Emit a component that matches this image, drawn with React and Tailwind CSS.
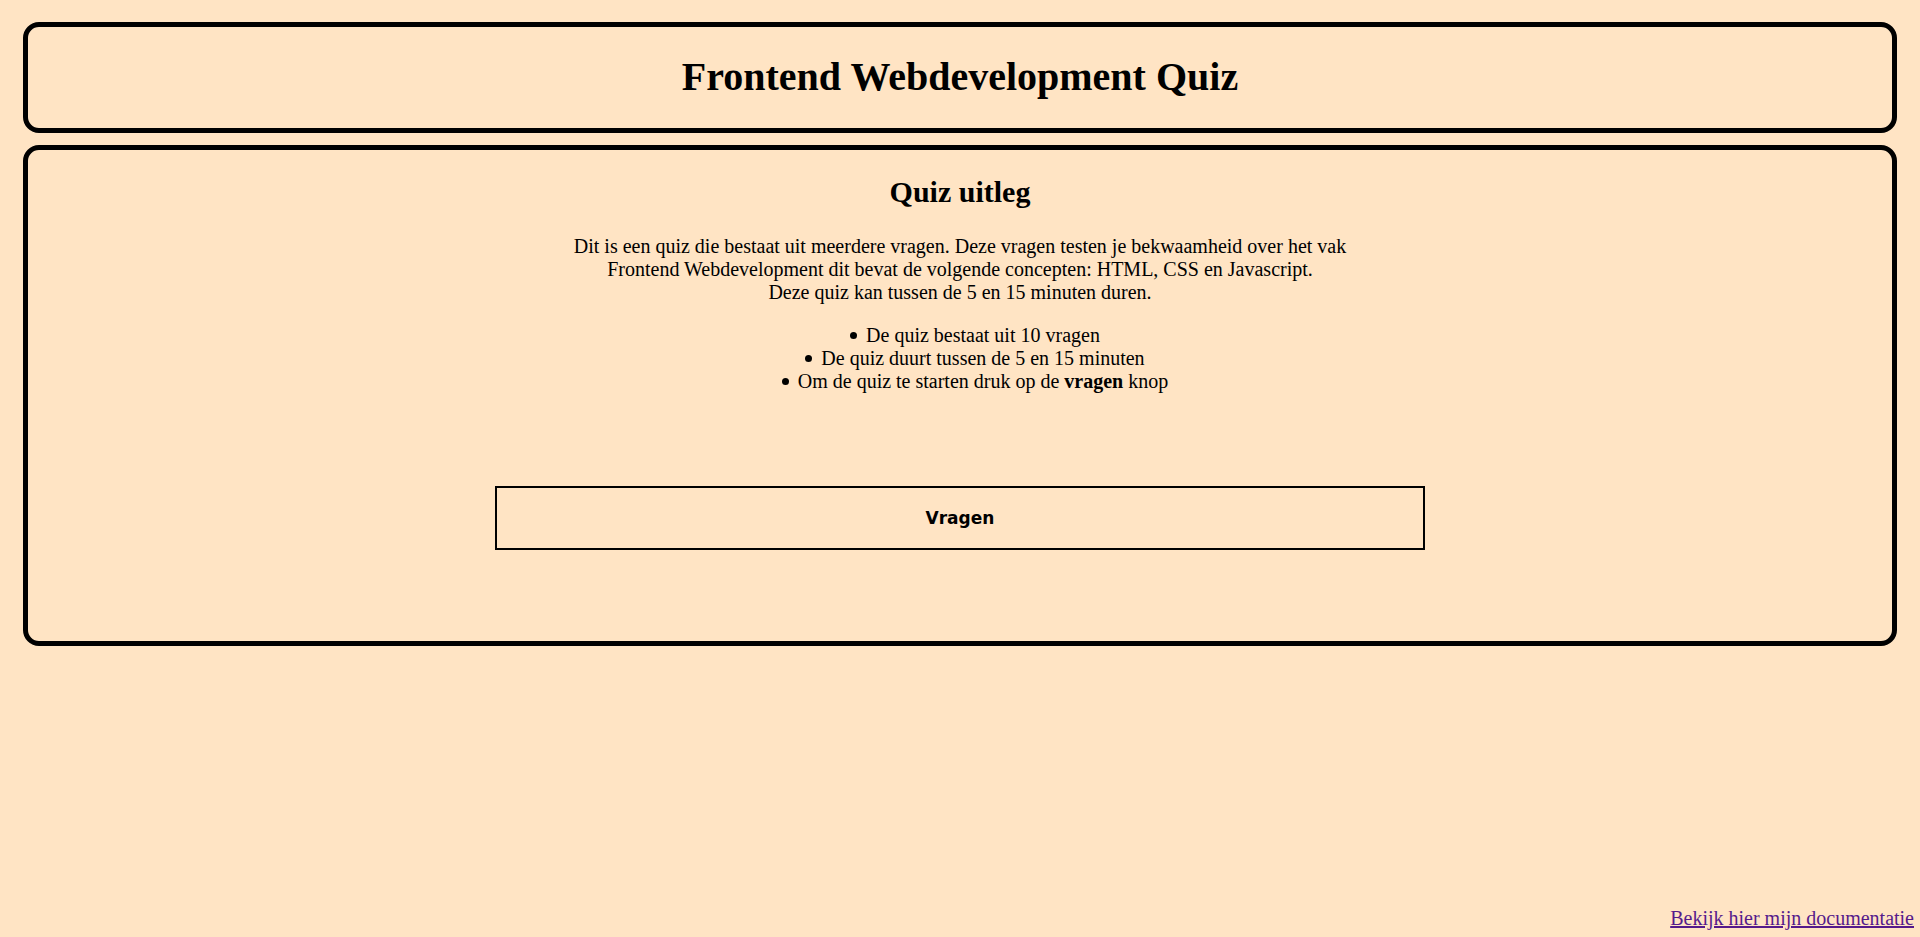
import React from "react";

const Bullet = () => (
  <span className="inline-block w-[7px] h-[7px] rounded-full bg-black align-middle mr-[9px] mb-[3px]" />
);

const App = () => {
  return (
    <div className="min-h-screen bg-[#ffe4c4] text-black flex flex-col font-['Liberation_Serif',serif] text-[20px] leading-[23px]">
      <header className="mt-[22px] mx-[23px] border-[5px] border-black rounded-[16px] pt-[27px] pb-[28px] text-center">
        <h1 className="text-[40px] leading-[46px] font-bold">Frontend Webdevelopment Quiz</h1>
      </header>

      <main className="mt-[12px] mx-[23px] border-[5px] border-black rounded-[16px] pt-[25px] pb-[91px] flex flex-col items-center text-center">
        <h2 className="text-[30px] leading-[34px] font-bold">Quiz uitleg</h2>
        <p className="mt-[26px]">
          Dit is een quiz die bestaat uit meerdere vragen. Deze vragen testen je bekwaamheid over het vak
          <br />
          Frontend Webdevelopment dit bevat de volgende concepten: HTML, CSS en Javascript.
          <br />
          Deze quiz kan tussen de 5 en 15 minuten duren.
        </p>
        <ul className="mt-[20px] pl-[30px]">
          <li>
            <Bullet />
            De quiz bestaat uit 10 vragen
          </li>
          <li>
            <Bullet />
            De quiz duurt tussen de 5 en 15 minuten
          </li>
          <li>
            <Bullet />
            Om de quiz te starten druk op de <strong className="font-bold">vragen</strong> knop
          </li>
        </ul>
        <button className="mt-[93px] w-[930px] h-[64px] border-2 border-black bg-transparent font-['DejaVu_Sans',sans-serif] font-bold text-[17px] cursor-pointer">
          Vragen
        </button>
      </main>

      <footer className="mt-auto pb-[7px] pr-[6px] text-right">
        <a href="#" className="text-[#551a8b] underline">
          Bekijk hier mijn documentatie
        </a>
      </footer>
    </div>
  );
};

export default App;
